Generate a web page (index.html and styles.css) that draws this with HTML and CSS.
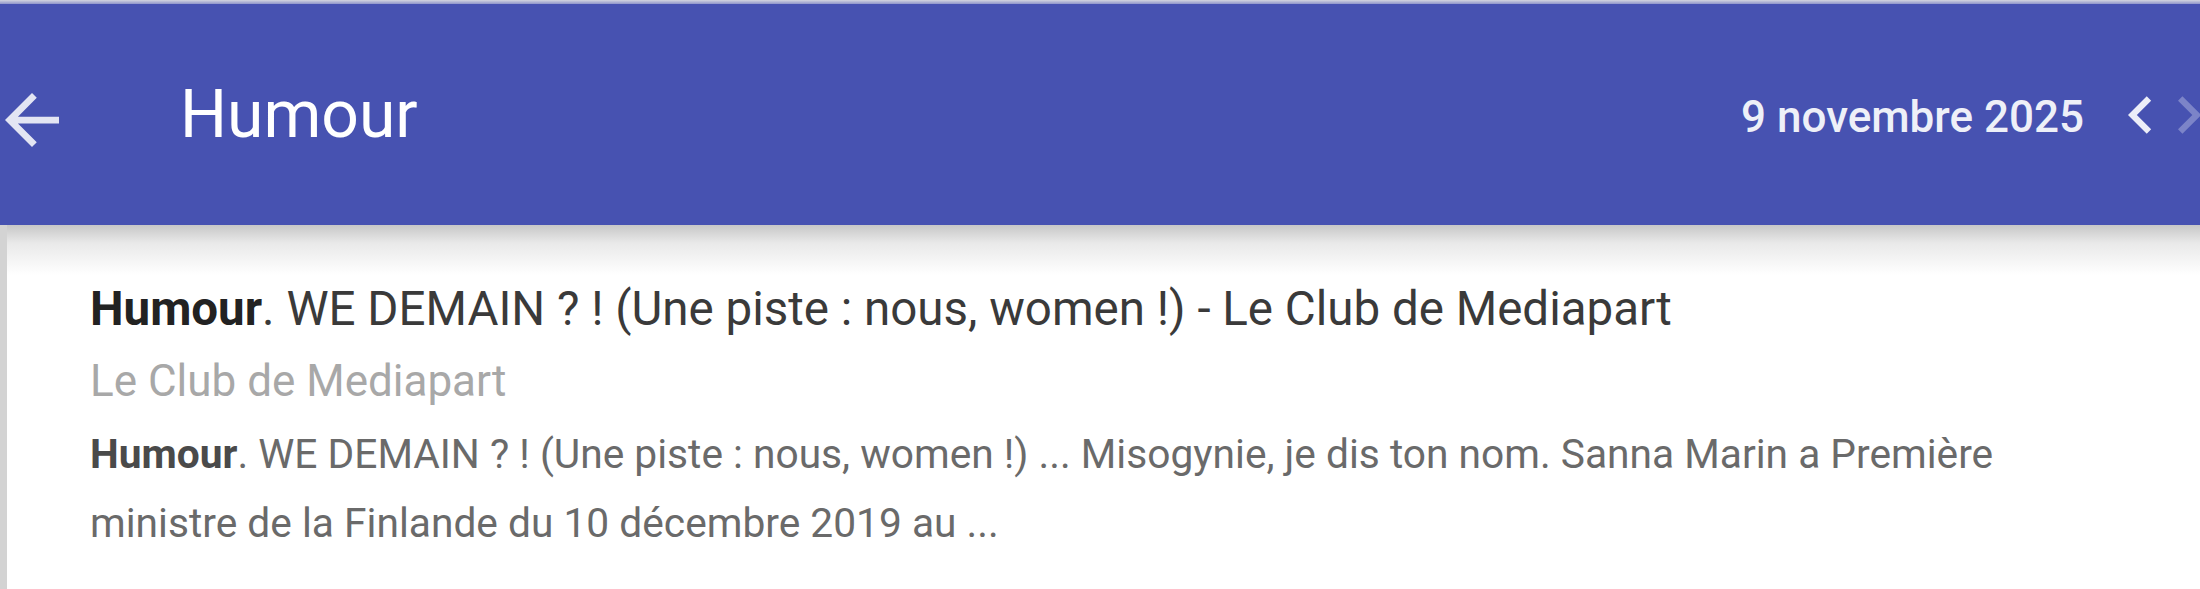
FILE: index.html
```html
<!DOCTYPE html>
<html lang="fr">
<head>
<meta charset="utf-8">
<title>Humour</title>
<link rel="stylesheet" href="styles.css">
</head>
<body>
<div class="topline"></div>
<header class="appbar">
  <svg class="back" viewBox="4 4 16 16" aria-hidden="true"><path d="M20 11H7.83l5.59-5.59L12 4l-8 8 8 8 1.41-1.41L7.83 13H20v-2z"/></svg>
  <h1 class="appbar-title">Humour</h1>
  <div class="spacer"></div>
  <div class="date">9 novembre 2025</div>
  <svg class="chev prev" viewBox="8 6 8 12" aria-hidden="true"><path d="M15.41 7.41L14 6l-6 6 6 6 1.41-1.41L10.83 12z"/></svg>
  <svg class="chev next" viewBox="8.59 6 8 12" aria-hidden="true"><path d="M10 6L8.59 7.41 13.17 12l-4.58 4.59L10 18l6-6z"/></svg>
</header>
<main class="content">
  <article class="result">
    <h2 class="result-title"><b>Humour</b>. WE DEMAIN ? ! (Une piste : nous, women !) - Le Club de Mediapart</h2>
    <div class="result-source">Le Club de Mediapart</div>
    <p class="result-snippet"><b>Humour</b>. WE DEMAIN ? ! (Une piste : nous, women !) ... Misogynie, je dis ton nom. Sanna Marin a Première ministre de la Finlande du 10 décembre 2019 au ...</p>
  </article>
</main>
</body>
</html>
```

FILE: styles.css
```css
html, body {
  margin: 0;
  padding: 0;
}
body {
  width: 2200px;
  height: 589px;
  overflow: hidden;
  background: #ffffff;
  font-family: Roboto, "Liberation Sans", sans-serif;
}
.topline {
  height: 4px;
  background: linear-gradient(#d4d5df, #8f95cb);
}
.appbar {
  height: 221px;
  background: #4752b1;
  display: flex;
  align-items: center;
  padding-left: 5px;
  color: #ffffff;
}
.back {
  width: 54px;
  height: 54px;
  fill: #e3e5f3;
  flex: none;
  margin-top: 10px;
}
.appbar-title {
  margin: 0 0 0 121px;
  font-size: 66px;
  font-weight: 400;
  line-height: 1;
}
.spacer {
  flex: 1;
}
.date {
  font-size: 44px;
  font-weight: 500;
  color: #eef0f8;
  line-height: 1;
  margin-top: 4px;
}
.chev {
  width: 25px;
  height: 38px;
  flex: none;
}
.prev {
  fill: #eceef8;
  margin-left: 44px;
}
.next {
  fill: #7c84c8;
  margin-left: 25px;
  margin-right: -3px;
}
.content {
  height: 364px;
  box-sizing: border-box;
  border-left: 7px solid #d3d3d3;
  padding: 48px 0 0 83px;
  background: linear-gradient(to bottom, #c7c7c7 0, #e9e9e9 18px, #ffffff 50px) no-repeat;
}
.result-title {
  margin: 0;
  font-size: 47.5px;
  font-weight: 400;
  line-height: 72px;
  color: #3a3a3a;
}
.result-title b {
  font-weight: 700;
  color: #222222;
}
.result-source {
  font-size: 44px;
  line-height: 72px;
  color: #a8a8a8;
}
.result-snippet {
  margin: 3px 0 0;
  width: 1960px;
  font-size: 40.7px;
  line-height: 69px;
  color: #6a6a6a;
}
.result-snippet b {
  font-weight: 700;
  color: #4a4a4a;
}
```
